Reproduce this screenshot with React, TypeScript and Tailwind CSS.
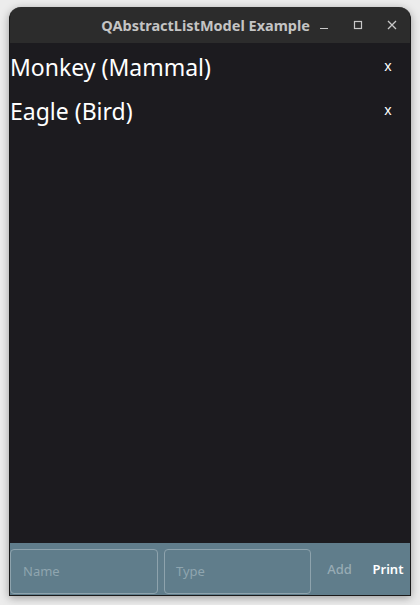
import React from "react";

type Animal = { name: string; type: string };

const animals: Animal[] = [
  { name: "Monkey", type: "Mammal" },
  { name: "Eagle", type: "Bird" },
];

export default function App() {
  return (
    <div
      className="w-[420px] h-[605px] bg-[#ececec] pt-[7px] px-[9px] pb-[9px] flex"
      style={{ fontFamily: '"Noto Sans", "Open Sans", sans-serif' }}
    >
      <div className="flex-1 flex flex-col rounded-t-[12px] overflow-hidden bg-[#2c2c2c] shadow-[0_2px_8px_rgba(0,0,0,0.35)] border border-[#1a1a1a] border-t-0">
        {/* title bar */}
        <div className="h-[36px] shrink-0 flex items-center">
          <div className="flex-1 text-right text-[14.5px] font-bold text-[#c4c4c4] pt-[1px]">
            QAbstractListModel Example
          </div>
          <div className="flex items-center gap-[20px] pl-[7px] pr-[11px] text-[#c8c8c8]">
            <svg width="14" height="14" viewBox="0 0 14 14">
              <path d="M3 10.5h8" stroke="currentColor" strokeWidth="1.2" />
            </svg>
            <svg width="14" height="14" viewBox="0 0 14 14">
              <rect x="3.5" y="3.5" width="7" height="7" fill="none" stroke="currentColor" strokeWidth="1.2" />
            </svg>
            <svg width="14" height="14" viewBox="0 0 14 14">
              <path d="M3 3l8 8M11 3l-8 8" stroke="currentColor" strokeWidth="1.3" />
            </svg>
          </div>
        </div>

        {/* list */}
        <div className="flex-1 bg-[#1c1b1f] flex flex-col pt-[2px]">
          {animals.map((a) => (
            <div key={a.name} className="h-[44px] flex items-center">
              <span className="flex-1 text-[23px] text-white leading-none">
                {a.name} ({a.type})
              </span>
              <button className="w-[44px] text-[14px] text-white leading-none pb-[2px]">x</button>
            </div>
          ))}
        </div>

        {/* input bar */}
        <div className="h-[52px] shrink-0 bg-[#607d8b] flex items-center gap-[6px] pr-[2px]">
          <div className="w-[148px] h-[45px] mt-[5px] rounded-[4px] border border-[#8ea3ad] flex items-center px-[12px] text-[13px] text-[#8fa5af]">
            Name
          </div>
          <div className="w-[147px] h-[45px] mt-[5px] rounded-[4px] border border-[#8ea3ad] flex items-center px-[11px] text-[13px] text-[#8fa5af]">
            Type
          </div>
          <button className="w-[45px] mt-[1px] text-[13px] font-medium text-[#97abb4]">Add</button>
          <button className="flex-1 mt-[1px] text-[13px] font-semibold text-white">Print</button>
        </div>
      </div>
    </div>
  );
}
